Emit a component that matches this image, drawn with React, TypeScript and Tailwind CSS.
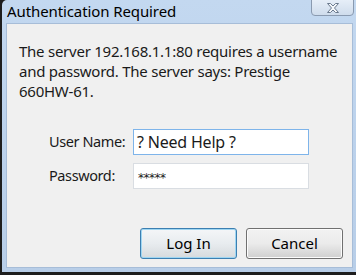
import React from "react";

export default function App() {
  const font = { fontFamily: '"Noto Sans", "Open Sans", sans-serif' };
  return (
    <div className="w-[356px] h-[275px] bg-[#1e1e1e] overflow-hidden" style={font}>
      <div className="ml-[2px] w-[354px] h-[272px] bg-gradient-to-b from-[#c3d8f0] via-[#bcd2ec] to-[#b8cee8] rounded-tl-[5px] flex flex-col">
        <div className="h-[23px] flex items-start relative">
          <span className="ml-[5px] mt-[1px] text-[15px] leading-[20px] text-black tracking-[-0.1px]">Authentication Required</span>
          <div className="absolute right-[2px] top-[-1px] w-[43px] h-[17px] rounded-b-[4px] border border-[#8a9ab0] bg-gradient-to-b from-[#e6eef8] to-[#cfdcec] flex items-center justify-center">
            <svg width="14" height="10" viewBox="0 0 14 10">
              <path d="M1.5 0.5 L4.5 0.5 L7 3 L9.5 0.5 L12.5 0.5 L8.5 5 L12.5 9.5 L9.5 9.5 L7 7 L4.5 9.5 L1.5 9.5 L5.5 5 Z" fill="#f4f7fb" stroke="#6b7a8e" strokeWidth="1" />
            </svg>
          </div>
        </div>
        <div className="ml-[4px] w-[347px] h-[245px] border border-[#a7bdd8] bg-[#f0f0f0] flex flex-col text-[#1a1a1a]">
          <p className="ml-[12px] mt-[17px] w-[320px] text-[15px] leading-[20px] tracking-[-0.25px]">
            The server 192.168.1.1:80 requires a username and password. The server says: Prestige 660HW-61.
          </p>
          <div className="mt-[28px] flex flex-col gap-[8px]">
            <div className="flex items-center">
              <span className="ml-[42px] w-[84px] text-[14.5px] tracking-[-0.4px]">User Name:</span>
              <div className="w-[176px] h-[26px] border border-[#7eb4ea] bg-white flex items-center pl-[3px] text-[16px] tracking-[-0.2px]">? Need Help ?</div>
            </div>
            <div className="flex items-center">
              <span className="ml-[42px] w-[84px] text-[14.5px] tracking-[-0.4px]">Password:</span>
              <div className="w-[176px] h-[26px] border border-[#d9dde2] bg-white flex items-center pl-[4px] pt-[4px] text-[12px] tracking-[-0.5px]" style={{ fontFamily: '"DejaVu Sans", sans-serif' }}>*****</div>
            </div>
          </div>
          <div className="mt-auto mb-[8px] flex justify-end gap-[9px] mr-[9px]">
            <button className="w-[97px] h-[31px] rounded-[3px] border border-[#3c7fb1] bg-gradient-to-b from-[#f4f6f8] via-[#e8ecef] to-[#d6dadd] text-[15px] text-black shadow-[inset_0_0_0_1px_#9fd6f2]">Log In</button>
            <button className="w-[97px] h-[31px] rounded-[3px] border border-[#707070] bg-gradient-to-b from-[#f2f2f2] via-[#ebebeb] to-[#cfcfcf] text-[15px] text-black shadow-[inset_0_0_0_1px_#fcfcfc]">Cancel</button>
          </div>
        </div>
      </div>
    </div>
  );
}
